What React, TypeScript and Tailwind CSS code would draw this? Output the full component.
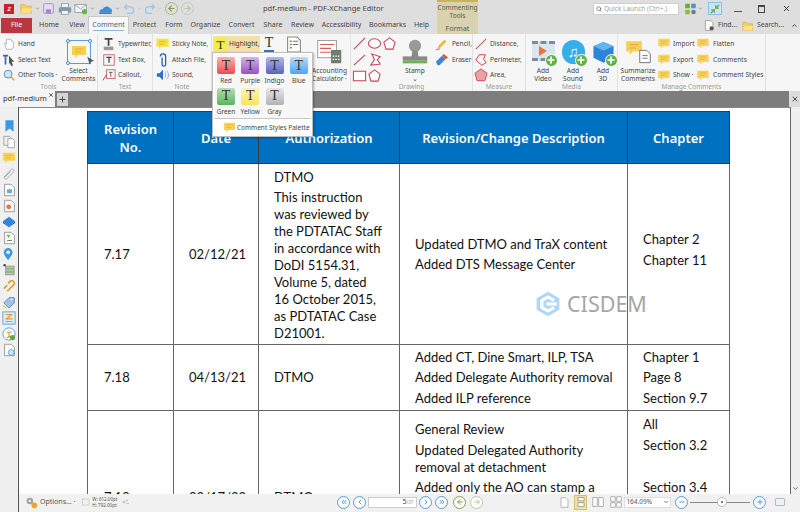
import React from "react";
import {
  ChevronUp, ChevronDown, ChevronsLeft, ChevronsRight, ChevronLeft, ChevronRight,
  ArrowLeft, ArrowRight, Plus, Minus, X, Search, Minimize2,
} from "lucide-react";

const font = "font-['Noto_Sans',sans-serif]";

type IconProps = { className?: string };

// small wrapper so every drawn icon shares the same viewBox
const Ico: React.FC<{ className?: string; children: React.ReactNode; box?: number }> = ({ className = "w-[14px] h-[14px]", children, box = 16 }) => (
  <svg viewBox={`0 0 ${box} ${box}`} className={`${className} shrink-0`} fill="none">{children}</svg>
);

const Folder = ({ className }: IconProps) => (
  <Ico className={className}>
    <path d="M1 3h5l1.5 2H14v9H1z" fill="#f7cf5a" stroke="#d9a93a" strokeWidth=".7" />
    <path d="M1 14l2-6h12l-2 6z" fill="#fde08a" />
  </Ico>
);
const Note = ({ className, fill = "#f6d24c" }: IconProps & { fill?: string }) => (
  <Ico className={className}>
    <path d="M1 2h14v9H7l-3 3v-3H1z" fill={fill} />
    <path d="M4 5h8M4 8h6" stroke="#e0a92a" strokeWidth=".8" />
  </Ico>
);
const Circle = ({ children, color = "#5a9bd8" }: { children: React.ReactNode; color?: string }) => (
  <span className="w-[13px] h-[13px] rounded-full border border-current bg-white flex items-center justify-center shrink-0" style={{ color }}>
    {children}
  </span>
);

const Poly = ({ d, closed = true }: { d: string; closed?: boolean }) => (
  <Ico className="w-[15px] h-[15px]">
    <path d={d + (closed ? "z" : "")} stroke="#c9404e" strokeWidth="1.1" fill="#fff" />
  </Ico>
);

const Row: React.FC<{ icon: React.ReactNode; label: string; className?: string }> = ({ icon, label, className = "" }) => (
  <div className={`flex items-center h-4 gap-[2px] whitespace-nowrap ${className}`}>
    <span className="w-[15px] flex justify-center shrink-0">{icon}</span>
    <span>{label}</span>
  </div>
);

const Big: React.FC<{ icon: React.ReactNode; lines: string[]; className?: string }> = ({ icon, lines, className = "" }) => (
  <div className={`flex flex-col items-center shrink-0 ${className}`}>
    <div className="h-[31px] flex items-center justify-center">{icon}</div>
    {lines.map((l) => <span key={l} className="leading-[8px] whitespace-nowrap">{l}</span>)}
  </div>
);

const Group: React.FC<{ label?: string; className: string; children: React.ReactNode }> = ({ label, className, children }) => (
  <div className={`flex flex-col shrink-0 border-r border-[#e2e2e2] ${className}`}>
    <div className="flex-1 flex pt-[2px] min-h-0">{children}</div>
    <div className="h-[8px] leading-[7px] text-center text-[6.5px] text-[#9a9a9a]">{label}</div>
  </div>
);

const AddBadge = () => (
  <span className="absolute -right-[3px] -bottom-[3px] w-[13px] h-[13px] rounded-full bg-[#62b246] border border-white flex items-center justify-center">
    <Plus className="w-[10px] h-[10px] text-white" strokeWidth={4} />
  </span>
);

const swatches = [
  { name: "Red", bg: "bg-gradient-to-b from-[#f9b0ae] to-[#e84a4c]" },
  { name: "Purple", bg: "bg-gradient-to-b from-[#d6b3e8] to-[#9a50c4]" },
  { name: "Indigo", bg: "bg-gradient-to-b from-[#b5b8e6] to-[#5d63bd]" },
  { name: "Blue", bg: "bg-gradient-to-b from-[#b6dcf9] to-[#4da3ee]" },
  { name: "Green", bg: "bg-gradient-to-b from-[#b3dfb4] to-[#5cb362]" },
  { name: "Yellow", bg: "bg-gradient-to-b from-[#fdf3b6] to-[#fbe35a]" },
  { name: "Gray", bg: "bg-gradient-to-b from-[#e8e8e8] to-[#b2b2b2]" },
];

const tabs = [
  { t: "Home", w: "w-[30px]" },
  { t: "View", w: "w-[26px]" },
  { t: "Protect", w: "w-[31px]" },
  { t: "Form", w: "w-[28px]" },
  { t: "Organize", w: "w-[35px]" },
  { t: "Convert", w: "w-[37px]" },
  { t: "Share", w: "w-[26px]" },
  { t: "Review", w: "w-[33px]" },
  { t: "Accessibility", w: "w-[45px]" },
  { t: "Bookmarks", w: "w-[47px]" },
  { t: "Help", w: "w-[21px]" },
];

const TitleBar = () => (
  <div className="h-[17px] flex items-center bg-[#dedede] relative shrink-0">
    <div className="w-[10px] h-[10px] ml-1 bg-[#c8232c] flex items-center justify-center text-[6px] font-bold text-white italic leading-none">Z</div>
    <Folder className="w-[13px] h-[13px] ml-[6px]" />
    <ChevronDown className="w-[5px] h-[5px] ml-[2px] text-gray-600" />
    <Ico className="w-[13px] h-[13px] ml-[2px]">
      <rect x="2" y="2" width="12" height="12" rx="1.5" fill="#e4dcf2" stroke="#9a8cc4" />
      <rect x="5" y="9" width="6" height="5" fill="#9a8cc4" />
    </Ico>
    <Ico className="w-[14px] h-[14px] ml-[3px]">
      <rect x="1" y="6" width="14" height="6" rx="1" fill="#7f97ad" />
      <rect x="4" y="2" width="8" height="4" fill="#fff" stroke="#7f97ad" />
      <rect x="4" y="10" width="8" height="4" fill="#fff" stroke="#7f97ad" />
    </Ico>
    <Ico className="w-[14px] h-[14px] ml-[2px]">
      <rect x="1" y="3" width="13" height="9" fill="#f5f5f5" stroke="#8aa0ae" />
      <path d="M1 3l6.5 5L14 3" stroke="#8aa0ae" />
      <circle cx="12" cy="11" r="3" fill="#69b34c" />
    </Ico>
    <ChevronDown className="w-[5px] h-[5px] ml-[2px] text-gray-600" />
    <Ico className="w-[17px] h-[14px] ml-[2px]">
      <path d="M1 12c0-3 2-4 4-4 1-3 6-4 8-1 2 0 3 2 2 5z" fill="#3d8fd8" />
      <rect x="1" y="12" width="14" height="1.5" fill="#1d6cb3" />
    </Ico>
    <ChevronDown className="w-[5px] h-[5px] ml-[1px] text-gray-600" />
    <Ico className="w-[13px] h-[13px] ml-[3px]">
      <path d="M5 3L2 6l3 3M2 6h7a4 4 0 010 8H5" stroke="#9cc3e8" strokeWidth="1.6" />
    </Ico>
    <ChevronDown className="w-[5px] h-[5px] text-gray-400 ml-[1px]" />
    <Ico className="w-[13px] h-[13px] ml-[1px]">
      <path d="M11 3l3 3-3 3M14 6H7a4 4 0 000 8h4" stroke="#9cc3e8" strokeWidth="1.6" />
    </Ico>
    <ChevronDown className="w-[5px] h-[5px] text-gray-400 ml-[1px]" />
    <span className="ml-[3px] flex gap-[3px]">
      <span className="w-[13px] h-[13px] rounded-full border border-[#a8b88e] flex items-center justify-center">
        <ArrowLeft className="w-[9px] h-[9px] text-[#7da34c]" strokeWidth={3} />
      </span>
      <span className="w-[13px] h-[13px] rounded-full border border-[#c4cbb6] flex items-center justify-center">
        <ArrowRight className="w-[9px] h-[9px] text-[#bcc9a4]" strokeWidth={3} />
      </span>
    </span>
    <span className="absolute left-[263px] top-[3px] text-[7.5px] leading-[11px] text-[#444] whitespace-nowrap">pdf-medium - PDF-XChange Editor</span>
    <div className="ml-auto flex items-center">
      <div className="w-[86px] h-[12px] bg-white border border-[#d0d0d0] flex items-center px-[2px] gap-[2px] text-[6.5px] text-[#a0a0a0]">
        <Search className="w-[6px] h-[6px] text-gray-500" strokeWidth={3} />
        Quick Launch (Ctrl+.)
      </div>
      <Ico className="w-[13px] h-[12px] ml-[5px]">
        <rect x="1" y="1" width="6" height="6" fill="#66a83e" />
        <rect x="9" y="1" width="6" height="6" fill="#4f91cf" />
        <rect x="1" y="9" width="6" height="6" fill="#8bbb3a" />
        <circle cx="12" cy="12" r="3" fill="#6b7c8a" />
      </Ico>
      <ChevronDown className="w-[5px] h-[5px] text-gray-600 ml-[1px]" />
      <span className="ml-[5px] w-[14px] h-[13px] bg-[#c8e4f5] border border-[#8fc1e3] flex items-center justify-center">
        <Minimize2 className="w-[10px] h-[10px] text-[#5fa845]" strokeWidth={3} />
      </span>
      <span className="ml-[12px] w-[8px] h-[1.5px] bg-[#555] translate-y-[3px]" />
      <span className="ml-[16px] w-[7px] h-[8px] border border-[#444] border-t-2" />
      <X className="ml-[17px] mr-[9px] w-[9px] h-[9px] text-[#333]" strokeWidth={2.5} />
    </div>
  </div>
);

const TabRow = () => (
  <div className="h-[17px] flex items-center bg-[#dedede] text-[7px] text-[#444] relative shrink-0">
    <div className="ml-[1px] w-[31px] h-[15px] bg-[#b8383d] text-white flex items-center justify-center">File</div>
    <div className="flex items-center ml-[2px] h-full">
      {tabs.slice(0, 2).map((x) => <span key={x.t} className={`${x.w} text-center`}>{x.t}</span>)}
    </div>
    <div className="w-[41px] h-[18px] -mt-px bg-[#f7f7f7] border border-b-0 border-[#c8c8c8] flex flex-col items-center justify-center ml-[-2px] text-[#3d6a8f]">
      <span className="leading-[10px]">Comment</span>
      <span className="w-[31px] h-px bg-[#8fb6d6]" />
    </div>
    <div className="flex items-center h-full">
      {tabs.slice(2).map((x) => <span key={x.t} className={`${x.w} text-center whitespace-nowrap`}>{x.t}</span>)}
    </div>
    <div className="absolute left-[437px] -top-[17px] w-[41px] h-[34px] bg-[#d9d2ae] border-t-2 border-[#c9b25e] text-center text-[6.5px] leading-[8px] text-[#5a5a4a] pt-[2px]">
      <div>Commenting</div>
      <div>Tools</div>
      <div className="mt-[5px] text-[7px]">Format</div>
    </div>
    <div className="ml-auto flex items-center gap-[3px] text-[6.8px] pr-[2px]">
      <Ico className="w-[11px] h-[13px]"><path d="M2 1h8l3 3v11H2z" fill="#fff" stroke="#888" /><circle cx="11" cy="12" r="3" fill="#555" /></Ico>
      <span>Find...</span>
      <Folder className="w-[12px] h-[12px] ml-[2px]" />
      <span>Search...</span>
      <ChevronUp className="w-[7px] h-[7px] ml-[4px] text-[#333]" strokeWidth={3} />
    </div>
  </div>
);

const Ribbon = () => (
  <div className="h-[57px] flex bg-[#f6f6f6] text-[6.6px] text-[#444] shrink-0">
    <Group label="Tools" className="w-[98px]">
      <div className="flex flex-col w-[60px] pl-[1px]">
        <Row label="Hand" icon={<Ico><path d="M5 14L3 8c0-1 1-1 2 0V3c0-1 2-1 2 0 0-1 2-1 2 0 1-.5 2 0 2 1v1c1-.5 2 0 2 1v4c0 2-1 4-2 4z" fill="#fff" stroke="#999" strokeWidth=".8" /></Ico>} />
        <Row label="Select Text" icon={<Ico><path d="M1 3h6M4 3v10" stroke="#3b6fa8" strokeWidth="2" /><path d="M8 3l6 7h-3l1.500 4-2 1-1.500-4-1 2z" fill="#555" /></Ico>} />
        <Row label="Other Tools ·" icon={<Ico><circle cx="7" cy="7" r="4.500" fill="#cfe4f5" stroke="#4b87bd" /><path d="M10 10l4 4" stroke="#d9a93a" strokeWidth="2" /></Ico>} />
      </div>
      <Big
        className="w-[37px]"
        lines={["Select", "Comments"]}
        icon={
          <span className="relative w-[24px] h-[24px] border border-[#5b9bd8] flex items-center justify-center">
            <Note className="w-[16px] h-[16px]" />
            <span className="absolute -left-[2px] -top-[2px] w-[4px] h-[4px] rounded-full border border-[#3f86cc] bg-white" />
            <span className="absolute -right-[2px] -top-[2px] w-[4px] h-[4px] rounded-full border border-[#3f86cc] bg-white" />
            <span className="absolute -left-[2px] -bottom-[2px] w-[4px] h-[4px] rounded-full border border-[#3f86cc] bg-white" />
            <Ico className="absolute -right-[6px] -bottom-[3px] w-[10px] h-[10px]"><path d="M2 1l11 7-5 1-2 5z" fill="#555" /></Ico>
          </span>
        }
      />
    </Group>
    <Group label="Text" className="w-[55px]">
      <div className="flex flex-col pl-[3px]">
        <Row label="Typewriter," icon={<Ico><path d="M3 2h9M7.500 2v8" stroke="#444" strokeWidth="2" /><rect x="2" y="11" width="11" height="4" fill="#999" /></Ico>} />
        <Row label="Text Box," icon={<Ico><rect x="2" y="2" width="12" height="12" stroke="#c9606c" /><path d="M5 5h6M8 5v6" stroke="#444" strokeWidth="1.500" /></Ico>} />
        <Row label="Callout," icon={<Ico><rect x="5" y="2" width="10" height="10" stroke="#c9606c" /><path d="M8 5h4M10 5v5M5 8L1 14" stroke="#555" /></Ico>} />
      </div>
    </Group>
    <Group label="Note" className="w-[59px]">
      <div className="flex flex-col pl-[2px]">
        <Row label="Sticky Note," icon={<Note className="w-[15px] h-[14px]" fill="#f4e33c" />} />
        <Row label="Attach File," icon={<Ico><path d="M6 4v8a2 2 0 004 0V3a3 3 0 00-6 0" stroke="#2c5fa8" strokeWidth="1.500" transform="translate(1 1)" /></Ico>} />
        <Row label="Sound," icon={<Ico><path d="M1 6h3l4-4v12l-4-4H1z" fill="#2d6fc4" /><path d="M10 5c1.500 1.500 1.500 4.500 0 6M12 3c3 3 3 7 0 10" stroke="#76a7d9" /></Ico>} />
      </div>
    </Group>
    <Group className="w-[139px]">
      <div className="w-[47px] h-4 bg-[#f6dfa4] flex items-center gap-[2px] pl-[1px] ml-[1px] text-[#333]">
        <span className="w-[13px] h-[13px] bg-[#f6ec4a] flex items-center justify-center font-['Liberation_Serif',serif] text-[13px] leading-none">T</span>
        Highlight,
      </div>
      <div className="ml-[4px] flex flex-col items-center h-4">
        <span className="font-['Liberation_Serif',serif] text-[14px] leading-[14px] text-[#333]">T</span>
        <span className="w-[10px] h-[1.500px] bg-[#3f6fc4]" />
      </div>
      <div className="ml-[10px]">
        <Ico className="w-[20px] h-[17px]">
          <path d="M2 1h9l3 3v11H2z" fill="#fff" stroke="#888" />
          <path d="M4 5h2M4 8h2M4 11h2" stroke="#5fa845" strokeWidth="1.300" />
          <path d="M7 5h5M7 8h5" stroke="#777" />
        </Ico>
      </div>
      <Big
        className="ml-auto mr-[2px] w-[37px]"
        lines={["Accounting", "Calculator ·"]}
        icon={
          <Ico className="w-[27px] h-[25px]">
            <rect x=".5" y="1" width="12" height="11" fill="#fff" stroke="#888" strokeWidth=".5" />
            <path d="M2 3.500h9M2 6h7M2 8.500h8" stroke="#d85a5a" strokeWidth=".7" />
            <rect x="9" y="7" width="6.500" height="8.500" fill="#6b7d70" />
            <path d="M10 11h4.500M10 13h4.500" stroke="#fff" strokeWidth=".8" strokeDasharray="1 .7" />
          </Ico>
        }
      />
    </Group>
    <Group label="Drawing" className="w-[122px]">
      <div className="grid grid-cols-3 w-[50px] h-[48px] pl-[1px] gap-y-[1px] content-start">
        <Poly closed={false} d="M2 14L14 2" />
        <Poly d="M8 3c4 0 6.500 2.500 6.500 5S12 13 8 13 1.500 10.500 1.500 8 4 3 8 3" />
        <Poly d="M8 2l6 4.500-2.200 7.500H4.200L2 6.500" />
        <Poly closed={false} d="M2 14L14 3" />
        <Poly d="M5 2l9 3-3 3 3 5-10 1 4-6" />
        <span />
        <Poly d="M1.500 3.500h13v10h-13" />
        <Poly d="M8 2l6 4.500-2.200 7.500H4.200L2 6.500" />
      </div>
      <Big
        className="w-[36px]"
        lines={["Stamp", "⌄"]}
        icon={
          <Ico className="w-[28px] h-[28px]">
            <circle cx="8" cy="4.500" r="3.500" fill="#9a9a9a" />
            <path d="M6.500 7h3l.5 4H6z" fill="#8a8a8a" />
            <rect x="1" y="10.500" width="14" height="2.500" fill="#8a8a8a" />
            <rect x="1" y="13" width="14" height="1.500" fill="#6db54a" />
          </Ico>
        }
      />
      <div className="flex flex-col pl-[2px]">
        <Row label="Pencil," icon={<Ico><path d="M3 13l1-3 7-7 2 2-7 7z" fill="#f0b23c" /><path d="M1 15c2-2 3 0 5-2" stroke="#d04a4a" /></Ico>} />
        <Row label="Eraser" icon={<Ico><path d="M1 10l7-7 4 4-7 7H3z" fill="#3d86d0" /><path d="M8 3l2-2 5 4-3 2z" fill="#e2564a" /></Ico>} />
      </div>
    </Group>
    <Group label="Measure" className="w-[53px]">
      <div className="flex flex-col">
        <Row label="Distance," icon={<Ico><path d="M2 14L14 2" stroke="#c9404e" strokeWidth="1.200" /></Ico>} />
        <Row label="Perimeter," icon={<Ico><path d="M6 2h7l-2 5 3 4-5 3-7-6z" stroke="#c9404e" strokeWidth="1.100" /></Ico>} />
        <Row label="Area," icon={<Ico><path d="M8 1l7 5-2.500 8.500h-9L1 6z" fill="#eaa0a6" stroke="#c9404e" /></Ico>} />
      </div>
    </Group>
    <Group label="Media" className="w-[92px]">
      <div className="flex pl-[3px] gap-[2px]">
        <Big
          className="w-[28px]"
          lines={["Add", "Video"]}
          icon={
            <span className="relative w-[23px] h-[24px]">
              <span className="absolute inset-x-0 top-[1px] h-[20px] bg-[#d9e6ef] border-y-[3px] border-dashed border-[#7b8d9a] flex items-center justify-center">
                <span className="w-0 h-0 border-y-[5px] border-y-transparent border-l-[8px] border-l-[#e9743c]" />
              </span>
              <AddBadge />
            </span>
          }
        />
        <Big
          className="w-[28px]"
          lines={["Add", "Sound"]}
          icon={
            <span className="relative w-[23px] h-[24px] rounded-full bg-[#35aeea] flex items-center justify-center text-white text-[15px] leading-none">
              ♫
              <AddBadge />
            </span>
          }
        />
        <Big
          className="w-[28px]"
          lines={["Add", "3D"]}
          icon={
            <span className="relative w-[23px] h-[24px]">
              <Ico className="w-[23px] h-[24px]"><path d="M8 1l7 3v8l-7 3.500L1 12V4z" fill="#2e83dc" /><path d="M1 4l7 3 7-3-7-3z" fill="#61b5f0" /></Ico>
              <AddBadge />
            </span>
          }
        />
      </div>
    </Group>
    <Group label="Manage Comments" className="w-[148px]">
      <Big
        className="w-[38px] ml-[1px]"
        lines={["Summarize", "Comments"]}
        icon={
          <span className="relative w-[28px] h-[26px]">
            <Note className="w-[20px] h-[18px]" fill="#f6cf5c" />
            <Ico className="absolute right-0 bottom-0 w-[14px] h-[17px]"><path d="M2 1h8l4 4v10H2z" fill="#fff" stroke="#666" /><path d="M5 7h6M5 10h6" stroke="#666" /></Ico>
          </span>
        }
      />
      <div className="flex flex-col -ml-[1px] w-[39px]">
        <Row label="Import" icon={<Note className="w-[14px] h-[13px]" fill="#f9d258" />} />
        <Row label="Export" icon={<Note className="w-[14px] h-[13px]" fill="#f9d258" />} />
        <Row label="Show ·" icon={<Note className="w-[14px] h-[13px]" fill="#f9d258" />} />
      </div>
      <div className="flex flex-col w-[64px]">
        <Row label="Flatten" icon={<Note className="w-[14px] h-[13px]" fill="#f9d258" />} className="gap-[3px]" />
        <Row label="Comments" icon={<Note className="w-[14px] h-[13px]" fill="#f9d258" />} className="gap-[3px]" />
        <Row label="Comment Styles" icon={<Note className="w-[14px] h-[13px]" fill="#f9d258" />} className="gap-[3px]" />
      </div>
    </Group>
  </div>
);

const Popover = () => (
  <div className="absolute left-[212px] top-[52px] w-[101px] h-[85px] bg-white border border-[#bdbdbd] shadow-[1px_1px_2px_rgba(0,0,0,0.3)] z-20 p-[1px] text-[6.5px] text-[#444]">
    <div className="h-[65px] bg-[#f7f7f7] border-b border-[#c8c8c8] grid grid-cols-4 pt-[3px] gap-y-[0px]">
      {swatches.map((s) => (
        <div key={s.name} className="flex flex-col items-center w-[24px]">
          <div className={`w-[18px] h-[17px] rounded-[2px] ${s.bg} flex items-center justify-center font-['Liberation_Serif',serif] text-[14px] leading-none text-[#333]`}>T</div>
          <span className="leading-[13px]">{s.name}</span>
        </div>
      ))}
    </div>
    <div className="flex items-center h-[17px] pl-[9px] gap-[1px] whitespace-nowrap">
      <Note className="w-[13px] h-[13px]" fill="#f9d258" />
      Comment Styles Palette
    </div>
  </div>
);

const TabStrip = () => (
  <div className="h-[16px] flex items-center bg-[#7d7d7d] shrink-0">
    <div className="w-[55px] h-full bg-[#f4f4f4] flex items-center pl-[3px] text-[7.5px] text-[#333] relative">
      pdf-medium
      <X className="absolute right-[1px] top-[1px] w-[6px] h-[6px] text-[#333]" strokeWidth={3} />
    </div>
    <div className="ml-[2px] w-[11px] h-[13px] bg-[#d4d4d4] flex items-center justify-center">
      <Plus className="w-[9px] h-[9px] text-[#444]" strokeWidth={2.5} />
    </div>
    <div className="ml-auto w-[11px] h-full bg-[#dcdcdc] flex items-center justify-center">
      <X className="w-[8px] h-[8px] text-[#333]" strokeWidth={2.5} />
    </div>
  </div>
);

const sideIcons: React.ReactNode[] = [
  <Ico className="w-[13px] h-[14px]" key="a"><path d="M3 1h10v14l-5-4-5 4z" fill="#3d9ae0" /></Ico>,
  <Ico className="w-[13px] h-[14px]" key="b"><path d="M1 1h7l2 2v9H1z" fill="#eee" stroke="#999" /><path d="M6 4h6l2 2v9H6z" fill="#fff" stroke="#999" /></Ico>,
  <Note className="w-[14px] h-[14px]" fill="#f7d552" key="c" />,
  <Ico className="w-[14px] h-[14px]" key="d"><path d="M2 12l8-9c2-2 5 1 3 3l-8 8c-1 1-3-1-2-2l7-7" stroke="#aaa" strokeWidth="1.100" /></Ico>,
  <Ico className="w-[13px] h-[14px]" key="e"><path d="M2 1h8l4 4v10H2z" fill="#fff" stroke="#888" /><rect x="5" y="7" width="6" height="5" fill="#6fa8d8" /></Ico>,
  <Ico className="w-[13px] h-[14px]" key="f"><path d="M2 1h8l4 4v10H2z" fill="#fff" stroke="#888" /><circle cx="7" cy="9" r="3" fill="#e9743c" /></Ico>,
  <Ico className="w-[14px] h-[14px]" key="g"><path d="M8 2l7 5-7 6-7-6z" fill="#2e86de" /><path d="M1 7l7 6 7-6v2l-7 5-7-5z" fill="#1c66b4" /></Ico>,
  <Ico className="w-[13px] h-[14px]" key="h"><path d="M2 1h8l4 4v10H2z" fill="#fff" stroke="#888" /><path d="M4 4l5 0-2 4z" fill="#6db54a" /><path d="M5 11h6" stroke="#555" /></Ico>,
  <Ico className="w-[14px] h-[14px]" key="i"><path d="M7 15C4 11 2 9 2 6a5 5 0 0110 0c0 3-2 5-5 9z" fill="#3d9ae0" /><circle cx="7" cy="6" r="2" fill="#fff" /></Ico>,
  <Ico className="w-[13px] h-[14px]" key="j"><path d="M3 3h11v3H3zM3 7h11v3H3zM3 11h11v3H3z" fill="#a9cf9a" stroke="#666" strokeWidth=".5" /><circle cx="2" cy="2" r="1.500" fill="#345" /></Ico>,
  <Ico className="w-[14px] h-[14px]" key="k"><path d="M2 11l4-4M6 14l8-8c1-2-2-5-4-4L7 5" stroke="#e09a2a" strokeWidth="1.800" /></Ico>,
  <Ico className="w-[14px] h-[14px]" key="l"><path d="M2 9l6-6h6v6l-6 6z" fill="#9fc4e4" stroke="#5b86ae" /><circle cx="11" cy="5" r="1" fill="#fff" /><path d="M1 12l4 3" stroke="#e0a02a" /></Ico>,
  <Ico className="w-[14px] h-[14px]" key="m"><rect x="1" y="1" width="14" height="14" fill="#dcecf8" stroke="#5b9bd8" /><path d="M4 4h7L5 9h7M4 12h8" stroke="#e09a2a" strokeWidth="1.300" /></Ico>,
  <Ico className="w-[14px] h-[14px]" key="n"><circle cx="8" cy="8" r="7" fill="#fff" stroke="#4b9ad8" /><path d="M8 3v1M5 6h6M8 6v4l-2 3M8 10l2 3" stroke="#e09a2a" strokeWidth="1.300" /><circle cx="12" cy="12" r="3" fill="#5fa845" /></Ico>,
  <Ico className="w-[13px] h-[14px]" key="o"><path d="M2 1h8l4 4v10H2z" fill="#fff" stroke="#888" /><circle cx="10" cy="11" r="3.500" fill="#cfe7f4" stroke="#4b9ad8" /></Ico>,
];

const Sidebar = () => (
  <div className="w-[19px] bg-[#f0f0f0] border-r-[1.5px] border-[#555] shrink-0 flex flex-col items-center pt-[12px] gap-[2px] overflow-hidden">
    {sideIcons}
  </div>
);

const Th: React.FC<{ children: React.ReactNode; className: string }> = ({ children, className }) => (
  <th className={`border border-[#3a3a3a] bg-[#0070c0] text-white text-[13px] leading-[18px] font-semibold text-center align-middle ${className}`}>{children}</th>
);

const body = "font-['Lato',sans-serif] text-[13px] text-[#111]";

const Cell: React.FC<{ lines: string[]; className?: string }> = ({ lines, className = "" }) => (
  <td className={`border border-[#666] align-middle leading-[20.500px] ${body} ${className}`}>
    {lines.map((l, i) => <div key={i} className="whitespace-nowrap">{l}</div>)}
  </td>
);

const Doc = () => (
  <div className="h-full relative overflow-hidden bg-white">
    <table className="absolute left-[68px] top-[3px] w-[642px] table-fixed border-collapse">
      <thead>
        <tr className="h-[52px]">
          <Th className="w-[86px]">Revision<br />No.</Th>
          <Th className="w-[85px]">Date</Th>
          <Th className="w-[141px]">Authorization</Th>
          <Th className="w-[228px]">Revision/Change Description</Th>
          <Th className="w-[102px]">Chapter</Th>
        </tr>
      </thead>
      <tbody>
        <tr className="h-[181px]">
          <Cell lines={["7.17"]} className="pl-[16px]" />
          <Cell lines={["02/12/21"]} className="pl-[15px]" />
          <td className={`border border-[#666] align-top pl-[15px] pt-[5px] leading-[17px] ${body}`}>
            <div className="mb-[3px]">DTMO</div>
            <div className="whitespace-nowrap">This instruction</div>
            <div className="whitespace-nowrap">was reviewed by</div>
            <div className="whitespace-nowrap">the PDTATAC Staff</div>
            <div className="whitespace-nowrap">in accordance with</div>
            <div className="whitespace-nowrap">DoDI 5154.31,</div>
            <div className="whitespace-nowrap">Volume 5, dated</div>
            <div className="whitespace-nowrap">16 October 2015,</div>
            <div className="whitespace-nowrap">as PDTATAC Case</div>
            <div className="whitespace-nowrap">D21001.</div>
          </td>
          <Cell lines={["Updated DTMO and TraX content", "Added DTS Message Center"]} className="pl-[15px]" />
          <Cell lines={["Chapter 2", "Chapter 11"]} className="pl-[15px] pb-[9px]" />
        </tr>
        <tr className="h-[66px]">
          <Cell lines={["7.18"]} className="pl-[16px]" />
          <Cell lines={["04/13/21"]} className="pl-[15px]" />
          <Cell lines={["DTMO"]} className="pl-[15px]" />
          <Cell lines={["Added CT, Dine Smart, ILP, TSA", "Added Delegate Authority removal", "Added ILP reference"]} className="pl-[15px]" />
          <Cell lines={["Chapter 1", "Page 8", "Section 9.7"]} className="pl-[15px]" />
        </tr>
        <tr className="h-[120px]">
          <Cell lines={["7.19"]} className="pl-[16px] pt-[54px]" />
          <Cell lines={["02/17/22"]} className="pl-[15px] pt-[54px]" />
          <Cell lines={["DTMO"]} className="pl-[15px] pt-[54px]" />
          <td className={`border border-[#666] align-top pl-[15px] pt-[10px] leading-[17px] ${body}`}>
            <div className="mb-[4px]">General Review</div>
            <div className="whitespace-nowrap">Updated Delegated Authority</div>
            <div className="whitespace-nowrap mb-[3px]">removal at detachment</div>
            <div className="whitespace-nowrap">Added only the AO can stamp a</div>
          </td>
          <td className={`border border-[#666] align-top pl-[15px] pt-[3px] leading-[21px] ${body}`}>
            <div>All</div>
            <div className="whitespace-nowrap">Section 3.2</div>
            <div className="h-[21px]" />
            <div className="whitespace-nowrap">Section 3.4</div>
          </td>
        </tr>
      </tbody>
    </table>
    {/* watermark sits over the page */}
    <div className="absolute left-[515px] top-[181px] flex items-center gap-[5px] opacity-70 z-10">
      <Ico className="w-[28px] h-[30px]">
        <path d="M8 1l6.500 3.700v6.600L8 15l-6.500-3.700V4.700z" fill="#8cc6f5" />
        <path d="M11.500 6L8 4 4.500 6v4L8 12l3.500-2" stroke="#fff" strokeWidth="1.800" />
        <path d="M7 8h6" stroke="#fff" strokeWidth="1.800" />
      </Ico>
      <span className="text-[21.500px] leading-none text-[#808080]">CISDEM</span>
    </div>
  </div>
);

const StatusBar = () => (
  <div className="h-[16px] flex items-center bg-[#f1f1f1] text-[6.500px] text-[#555] relative shrink-0">
    <Ico className="w-[13px] h-[13px] ml-[6px]">
      <circle cx="6" cy="6" r="4" fill="#a2a2a2" />
      <circle cx="6" cy="6" r="1.500" fill="#f1f1f1" />
      <circle cx="11.500" cy="11.500" r="3.500" fill="#efa32c" />
    </Ico>
    <span className="ml-[2px] text-[7px] whitespace-nowrap">Options... ·</span>
    <Ico className="w-[8px] h-[8px] ml-[7px]"><rect x="1" y="2" width="13" height="12" stroke="#999" strokeDasharray="2 1" /></Ico>
    <div className="ml-[2px] text-[4.500px] leading-[6px] whitespace-nowrap">
      <div>W: 612.00pt</div>
      <div>H: 792.00pt</div>
    </div>
    <Ico className="w-[8px] h-[8px] ml-[5px]"><path d="M1 8h6M4 5v6M10 2v5M9 11h5" stroke="#999" /></Ico>

    <div className="ml-[207px] flex items-center gap-[3px]">
      <Circle><ChevronsLeft className="w-[8px] h-[8px]" strokeWidth={3} /></Circle>
      <Circle><ChevronLeft className="w-[8px] h-[8px]" strokeWidth={3} /></Circle>
    </div>
    <div className="ml-[2px] w-[49px] h-[11px] bg-white border border-[#ccc] flex items-center justify-end pr-[3px] text-[7px] text-[#444]">
      5<span className="text-[4.500px] text-[#999]">/37</span>
    </div>
    <div className="ml-[2px] flex items-center gap-[3px]">
      <Circle><ChevronRight className="w-[8px] h-[8px]" strokeWidth={3} /></Circle>
      <Circle><ChevronsRight className="w-[8px] h-[8px]" strokeWidth={3} /></Circle>
    </div>
    <div className="ml-[5px] flex items-center gap-[4px]">
      <Circle color="#7da34c"><ArrowLeft className="w-[8px] h-[8px]" strokeWidth={3} /></Circle>
      <Circle color="#bcc9a4"><ArrowRight className="w-[8px] h-[8px]" strokeWidth={3} /></Circle>
    </div>

    <div className="ml-[76px] flex items-center gap-[4px]">
      <Ico className="w-[11px] h-[13px]"><path d="M3 1h7l3 3v11H3z" fill="#fff" stroke="#999" /></Ico>
      <span className="w-[13px] h-[15px] bg-[#f3dfa8] border border-[#d9bd72] flex items-center justify-center">
        <Ico className="w-[10px] h-[12px]"><path d="M3 1h10v5H3zM3 9h10v6H3z" fill="#fff" stroke="#777" /></Ico>
      </span>
      <Ico className="w-[14px] h-[12px]"><path d="M1 2h6v12H1zM9 2h6v12H9z" fill="#fff" stroke="#999" /></Ico>
      <Ico className="w-[14px] h-[12px]"><path d="M1 1h6v6H1zM9 1h6v6H9zM1 9h6v6H1zM9 9h6v6H9z" fill="#fff" stroke="#999" /></Ico>
    </div>
    <div className="ml-[1px] w-[47px] h-[11px] bg-white border border-[#ddd] flex items-center justify-between px-[1px] text-[6.500px] text-[#555]">
      164.09%
      <ChevronDown className="w-[6px] h-[6px]" strokeWidth={3} />
    </div>
    <span className="ml-[4px]"><Circle><Minus className="w-[8px] h-[8px]" strokeWidth={3} /></Circle></span>
    <div className="ml-[2px] w-[60px] h-px bg-[#888] relative">
      <span className="absolute left-[27px] -top-[5px] w-[10px] h-[10px] rounded-full bg-white border border-[#bbb] flex items-center justify-center">
        <span className="w-[2px] h-[2px] rounded-full bg-[#555]" />
      </span>
    </div>
    <span className="ml-[3px]"><Circle><Plus className="w-[8px] h-[8px]" strokeWidth={3} /></Circle></span>
    <span className="ml-[9px] w-[10px] h-[8px] border border-[#a9bccb] rounded-[1px]" />
  </div>
);

export default function App() {
  return (
    <div className={`w-[800px] h-[512px] overflow-hidden relative flex flex-col bg-[#f0f0f0] ${font}`}>
      <TitleBar />
      <TabRow />
      <Ribbon />
      <TabStrip />
      <div className="flex flex-1 min-h-0">
        <Sidebar />
        <div className="flex-1 flex flex-col min-w-0 pb-[2px]">
          <div className="flex flex-1 min-h-0">
            <div className="flex-1 min-w-0 border-t border-[#888]"><Doc /></div>
            <div className="w-[10px] border-l-[1.500px] border-[#666] bg-[#f0f0f0] flex flex-col justify-end items-center">
              <ChevronDown className="w-[7px] h-[7px] text-[#666] mb-[2px]" strokeWidth={3} />
            </div>
          </div>
          <StatusBar />
        </div>
      </div>
      <Popover />
    </div>
  );
}
